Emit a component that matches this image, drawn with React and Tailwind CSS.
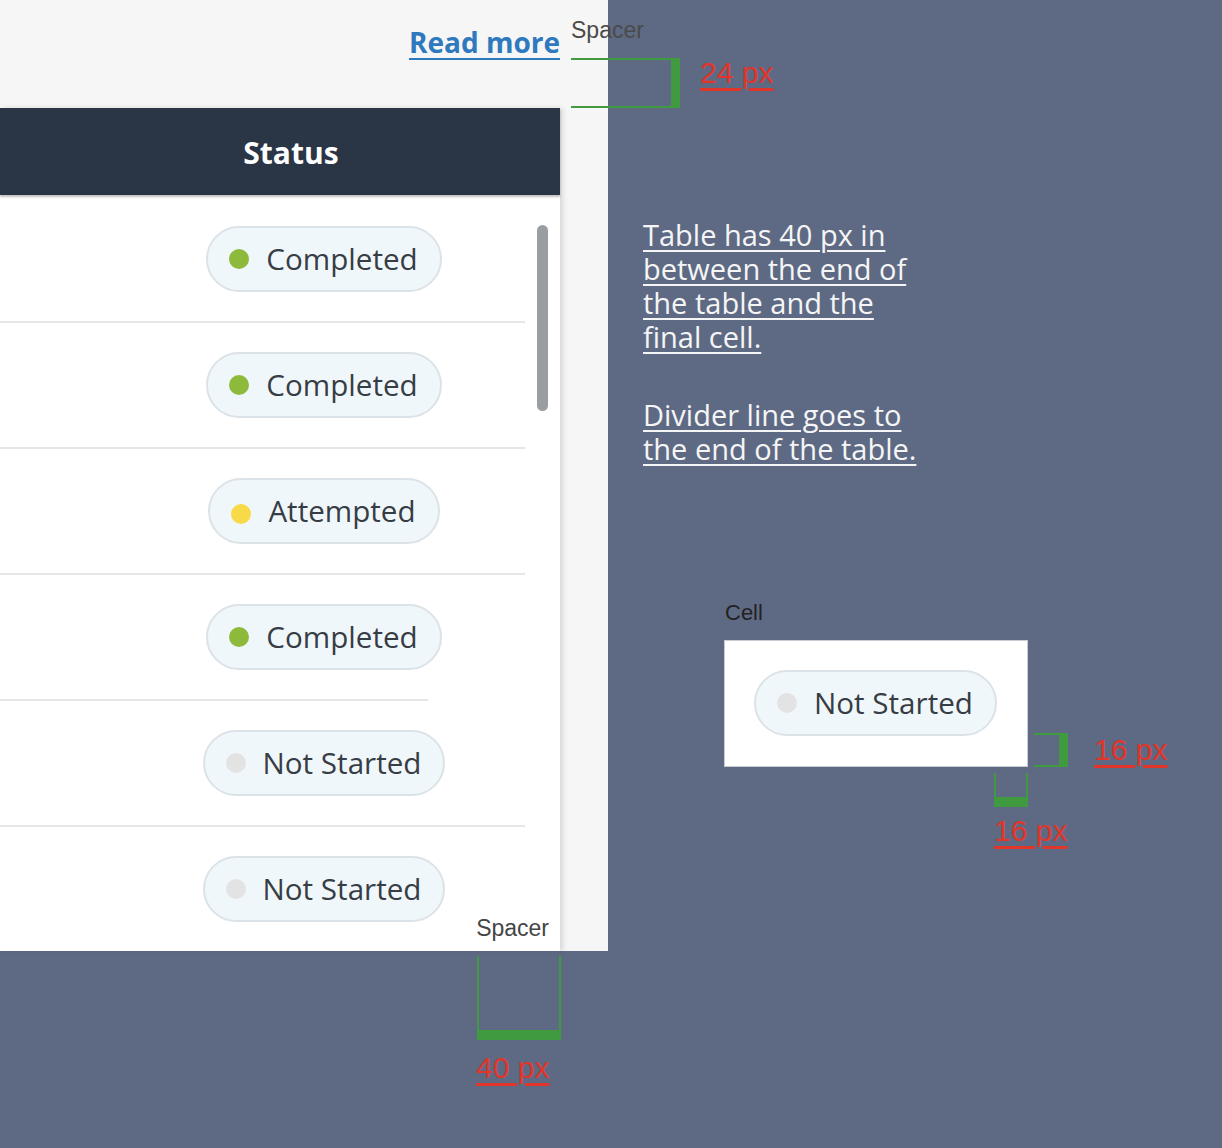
import React from "react";

// ── Données du tableau ─────────────────────────────────────────────
const ROWS = [
  { label: "Completed", dot: "bg-[#8dba3b]", divider: "w-[525px]" },
  { label: "Completed", dot: "bg-[#8dba3b]", divider: "w-[525px]" },
  { label: "Attempted", dot: "bg-[#f8da48] mt-[6px]", divider: "w-[525px]" },
  { label: "Completed", dot: "bg-[#8dba3b]", divider: "w-[428px]" },
  { label: "Not Started", dot: "bg-[#e3e3e3]", divider: "w-[525px]" },
  { label: "Not Started", dot: "bg-[#e3e3e3]", divider: null },
];

const openSans = "font-['Open_Sans','Noto_Sans',sans-serif]";
const label = "font-['Liberation_Sans',Arial,sans-serif]";
const measure = `text-[30px] leading-none text-[#e2352a] underline underline-offset-[5px] ${label}`;

function StatusPill({ text, dot }) {
  return (
    <div
      className={`flex items-center h-[66px] pl-[21px] pr-[22px] rounded-full border-2 border-[#dce3e8] bg-[#f0f7fb] ${openSans}`}
    >
      <span className={`w-[20px] h-[20px] rounded-full flex-shrink-0 ${dot}`} />
      <span className="ml-[17px] text-[29.6px] leading-none text-[#373d44] whitespace-nowrap">
        {text}
      </span>
    </div>
  );
}

export default function App() {
  return (
    <div className="relative w-[1222px] h-[1148px] overflow-hidden bg-[#5e6a84]">
      {/* Artboard */}
      <div className="absolute left-0 top-0 w-[608px] h-[951px] bg-[#f6f6f6] flex flex-col">
        <div className="h-[108px] w-[560px] flex justify-end pt-[28px]">
          <a
            href="#"
            className={`text-[28px] font-bold leading-none text-[#2f79be] underline underline-offset-[5px] decoration-2 ${openSans}`}
          >
            Read more
          </a>
        </div>

        {/* Table card */}
        <div className="relative w-[560px] flex-1 bg-white flex flex-col shadow-[3px_0_5px_rgba(0,0,0,0.12)]">
          <div className="h-[87px] bg-[#2a3646] flex items-center justify-center pl-[22px] pt-[2px] shadow-[0_2px_2px_rgba(0,0,0,0.25)] z-10">
            <span className={`text-[30px] font-bold text-white ${openSans}`}>Status</span>
          </div>

          <div className="relative flex-1 flex flex-col pt-[2px]">
            {ROWS.map((r, i) => (
              <div key={i} className="flex flex-col">
                <div className="h-[124px] flex items-center justify-center pl-[123px] w-[525px]">
                  <StatusPill text={r.label} dot={r.dot} />
                </div>
                {r.divider && <div className={`h-[2px] bg-[#e6e6e6] ${r.divider}`} />}
              </div>
            ))}

            {/* Scrollbar */}
            <div className="absolute right-[12px] top-[30px] w-[11px] h-[186px] rounded-full bg-[#9a9ea3]" />
          </div>

          <span className={`absolute right-[11px] bottom-[11px] text-[23px] leading-none text-[#454545] ${label}`}>
            Spacer
          </span>
        </div>
      </div>

      {/* Annotation: top spacer */}
      <div className="absolute left-[571px] top-[19px] flex items-start gap-[20px]">
        <div className="flex flex-col gap-[16px]">
          <span className={`text-[23px] leading-none text-[#4a4a4a] ${label}`}>Spacer</span>
          <div className="w-[109px] h-[50px] border-t-2 border-b-2 border-r-[9px] border-[#3f9a40]" />
        </div>
        <span className={`mt-[39px] ${measure}`}>24 px</span>
      </div>

      {/* Notes */}
      <div className={`absolute left-[643px] top-[218px] w-[292px] text-[29px] leading-[34px] text-[#f5f5f5] ${openSans}`}>
        <p className="underline underline-offset-[4px] decoration-2">
          Table has 40 px in between the end of the table and the final cell.
        </p>
        <p className="mt-[44px] underline underline-offset-[4px] decoration-2">
          Divider line goes to the end of the table.
        </p>
      </div>

      {/* Cell spec */}
      <div className="absolute left-[724px] top-[602px] flex flex-col">
        <span className={`ml-[1px] text-[22px] leading-none text-[#222] ${label}`}>Cell</span>
        <div className="flex items-end mt-[16px]">
          <div className="w-[304px] h-[127px] bg-white border border-[#c9ccd3] pl-[29px] pt-[29px]">
            <div className="inline-flex">
              <StatusPill text="Not Started" dot="bg-[#e3e3e3]" />
            </div>
          </div>
          <div className="ml-[6px] w-[34px] h-[34px] border-t-2 border-b-2 border-r-[9px] border-[#3f9a40]" />
          <span className={`ml-[26px] mb-[2px] ${measure}`}>16 px</span>
        </div>
        <div className="ml-[270px] mt-[6px] w-[34px] h-[34px] border-l-2 border-r-2 border-b-[10px] border-[#3f9a40]" />
        <span className={`ml-[270px] mt-[9px] ${measure}`}>16 px</span>
      </div>

      {/* Bottom spacer */}
      <div className="absolute left-[476px] top-[956px] flex flex-col">
        <div className="ml-[1px] w-[84px] h-[84px] border-l-2 border-r-2 border-b-[10px] border-[#3f9a40]" />
        <span className={`mt-[13px] ${measure}`}>40 px</span>
      </div>
    </div>
  );
}
